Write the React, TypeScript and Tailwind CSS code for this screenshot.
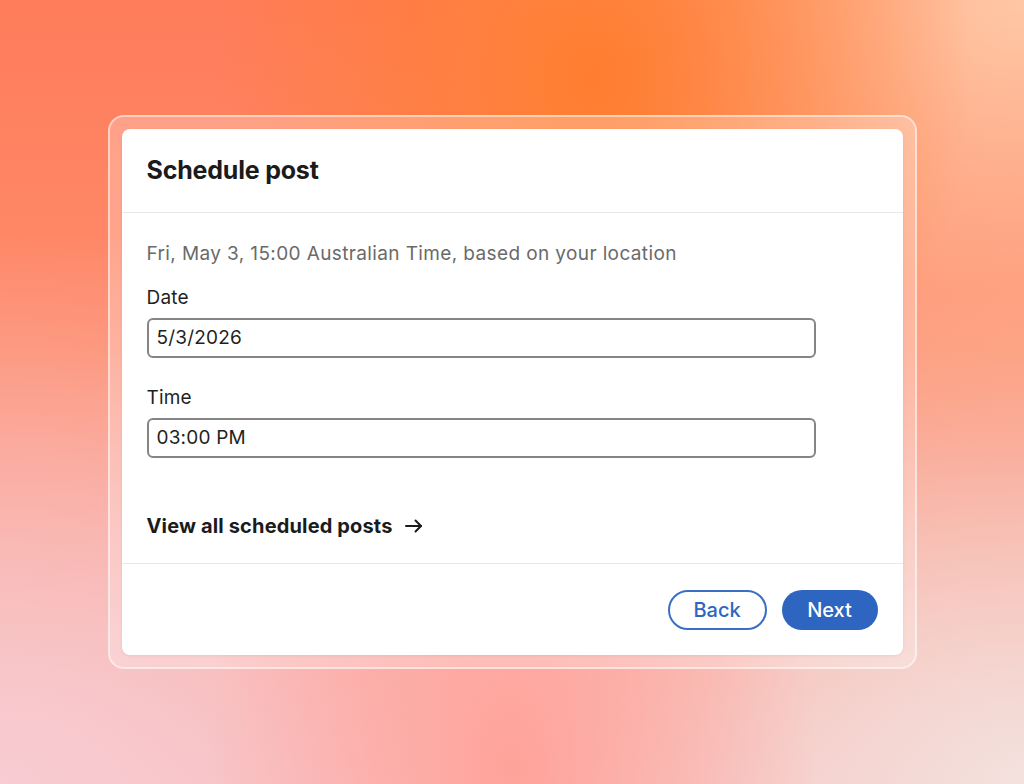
import React from "react";

const font = { fontFamily: 'Inter, "Noto Sans", "Liberation Sans", sans-serif' };

function Field({ label, value }: { label: string; value: string }) {
  return (
    <div className="flex flex-col">
      <label className="text-[19px] leading-[24px] tracking-[0.2px] text-[#1f1f1f]">{label}</label>
      <div className="mt-2 flex h-10 w-[669px] items-center rounded-[6px] border-2 border-[#858585] bg-white pl-[8px] text-[19px] tracking-[0.2px] text-[#1f1f1f]">
        {value}
      </div>
    </div>
  );
}

export default function App() {
  return (
    <div
      style={font}
      className="flex h-[784px] w-[1024px] items-start justify-center overflow-hidden bg-[radial-gradient(ellipse_at_58%_10%,#ff7d2e_0%,rgba(255,125,46,0)_45%),radial-gradient(ellipse_at_100%_0%,#ffc8a6_0%,rgba(255,200,166,0)_42%),radial-gradient(ellipse_at_50%_98%,#ffa39a_0%,rgba(255,163,154,0)_42%),radial-gradient(ellipse_at_100%_100%,#f3e1dd_0%,rgba(243,225,221,0)_45%),radial-gradient(ellipse_at_0%_100%,#f7ccd2_0%,rgba(247,204,210,0)_50%),linear-gradient(180deg,#ff7c5a_0%,#fe8c6c_45%,#f9b6b6_100%)]"
    >
      <div className="mt-[115px] rounded-[16px] border-2 border-white/50 bg-white/25 p-3">
        <div className="flex w-[781px] flex-col rounded-[8px] bg-white shadow-[0_1px_3px_rgba(0,0,0,0.06)]">
          <div className="flex h-[84px] items-center border-b border-[#e9e9e9] px-[25px]">
            <h1 className="text-[25px] font-bold tracking-[-0.2px] text-[#1b1b1b]">Schedule post</h1>
          </div>
          <div className="flex flex-col border-b border-[#e9e9e9] px-[25px] pb-[25px] pt-[29px]">
            <p className="text-[19px] leading-[24px] tracking-[0.38px] text-[#6a6a6a]">
              Fri, May 3, 15:00 Australian Time, based on your location
            </p>
            <div className="mt-5">
              <Field label="Date" value="5/3/2026" />
            </div>
            <div className="mt-7">
              <Field label="Time" value="03:00 PM" />
            </div>
            <a className="mt-[56px] flex items-center gap-3 text-[20px] font-bold leading-[24px] tracking-[0.15px] text-[#1b1b1b]">
              View all scheduled posts
              <svg width="18" height="14" viewBox="0 0 18 14" fill="none" stroke="#1b1b1b" strokeWidth="2" strokeLinecap="round" strokeLinejoin="round">
                <path d="M1 7h15" />
                <path d="M10.5 1.5 16 7l-5.5 5.5" />
              </svg>
            </a>
          </div>
          <div className="flex h-[91px] items-center justify-end gap-[15px] px-[25px]">
            <button className="h-10 w-[99px] rounded-full border-2 border-[#3a6fc4] bg-white text-[20px] font-medium text-[#2f66bf]">
              Back
            </button>
            <button className="h-10 w-[96px] rounded-full bg-[#2d65c0] text-[20px] font-medium text-white">
              Next
            </button>
          </div>
        </div>
      </div>
    </div>
  );
}
